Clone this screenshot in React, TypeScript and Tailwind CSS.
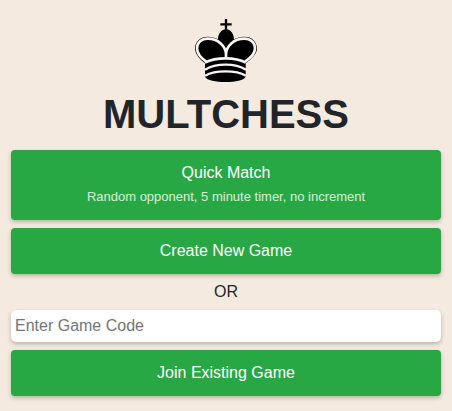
import React from "react";

function KingLogo() {
  return (
    <svg viewBox="27 27 186 189" className="h-[63px] w-[62px]" role="img" aria-label="Chess king">
      <path d="M120 27v36M103 43h34" fill="none" stroke="#000" strokeWidth="7" />
      <path
        d="M120 152C112 130 96 114 96 89c0-18 10-31 24-31s24 13 24 31c0 25-16 41-24 63z"
        fill="#000"
      />
      <path
        d="M57 160C40 147 27 132 27 115c0-21 17-35 38-35 27 0 48 15 55 35 7-20 28-35 55-35 21 0 38 14 38 35 0 17-16 32-34 45v40c-6 11-30 16-60 16s-56-5-62-16z"
        fill="#000"
      />
      <g fill="none" stroke="#f8f5f2" strokeWidth="8">
        <path
          d="M61 155C46 145 33 131 33 115c0-18 14-29 32-29 31 0 55 22 55 48v12M177 155c16-10 30-24 30-40 0-18-14-29-32-29-31 0-55 22-55 48"
        />
        <path d="M57 158c17-9 38-13 62-13s44 4 60 13" />
        <path d="M57 179c16-10 37-15 62-15s45 5 61 15" strokeWidth="7" />
        <path d="M57 197c16-9 37-13 62-13s45 4 61 13" strokeWidth="7" />
      </g>
    </svg>
  );
}

function GreenButton({ children }: { children: React.ReactNode }) {
  return (
    <button
      type="button"
      className="w-full cursor-pointer rounded bg-[#28a745] px-3 py-[11px] text-center text-base text-white shadow-[0_2px_4px_rgba(0,0,0,0.25)] hover:bg-[#218838]"
    >
      {children}
    </button>
  );
}

export default function App() {
  return (
    <main className="min-h-screen bg-[#f5eadf] px-[11px] pt-[19px] pb-[15px] font-['Liberation_Sans',Arial,sans-serif] text-base text-[#212529]">
      <header className="mb-3 flex flex-col items-center gap-2">
        <KingLogo />
        <h1 className="text-[40px] leading-[48px] font-bold">MULTCHESS</h1>
      </header>
      <div className="flex flex-col gap-2">
        <GreenButton>
          <span className="block">Quick Match</span>
          <span className="block text-[13px] leading-6 text-white/80">
            Random opponent, 5 minute timer, no increment
          </span>
        </GreenButton>
        <GreenButton>Create New Game</GreenButton>
      </div>
      <p className="my-1.5 text-center">OR</p>
      <form className="flex flex-col gap-2" onSubmit={(event) => event.preventDefault()}>
        <input
          type="text"
          aria-label="Game code"
          placeholder="Enter Game Code"
          className="h-8 w-full rounded-[5px] bg-white px-1 shadow-[0_2px_4px_rgba(0,0,0,0.25)] outline-none placeholder:text-[#757575]"
        />
        <GreenButton>Join Existing Game</GreenButton>
      </form>
    </main>
  );
}
